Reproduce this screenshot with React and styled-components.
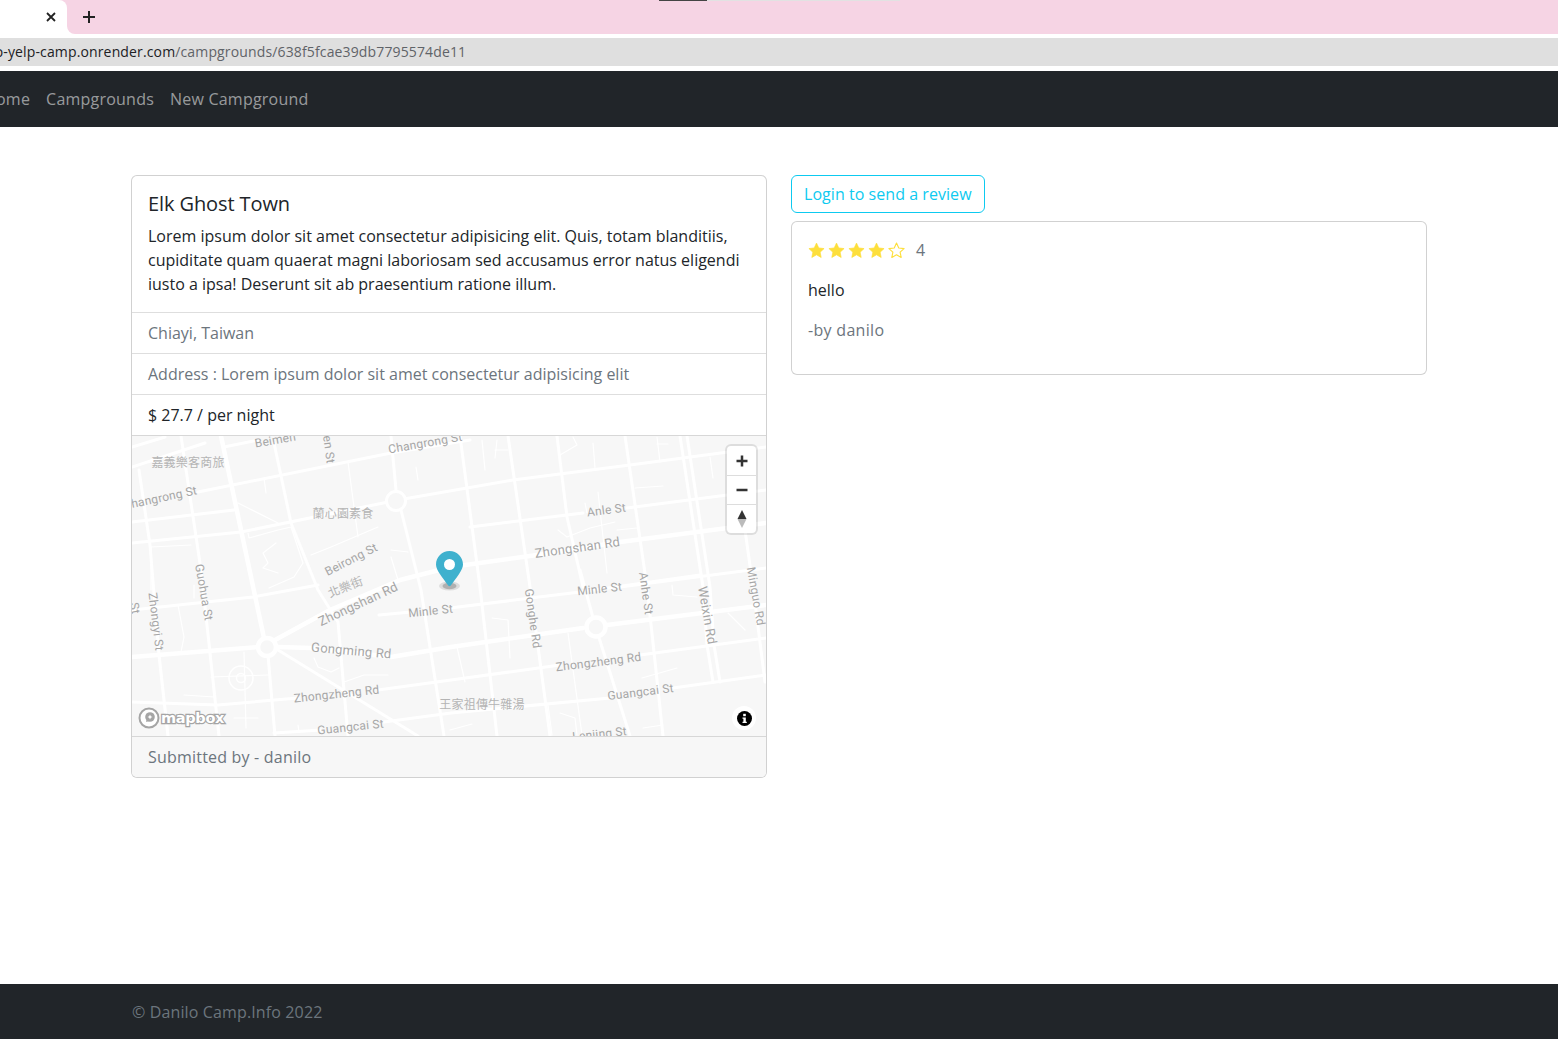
import React from 'react';
import styled, { createGlobalStyle } from 'styled-components';

const GlobalStyle = createGlobalStyle`
  * { box-sizing: border-box; }
  body {
    margin: 0;
    background: #fff;
    color: #212529;
    font-family: "Open Sans", "Noto Sans", sans-serif;
    font-size: 16px;
    line-height: 24px;
    overflow: hidden;
  }
`;

const Page = styled.div`
  width: 1558px;
  height: 1039px;
  display: flex;
  flex-direction: column;
  overflow: hidden;
`;

const TabStrip = styled.div`
  position: relative;
  height: 34px;
  display: flex;
  flex-shrink: 0;
`;

const TabWrap = styled.div`
  width: 67px;
  background: #f6d4e4;
`;

const Tab = styled.div`
  height: 34px;
  background: #fff;
  border-top-right-radius: 8px;
  display: flex;
  align-items: center;
  justify-content: flex-end;
  padding-right: 11px;
`;

const TabRest = styled.div`
  flex: 1;
  background: #f6d4e4;
  border-bottom-left-radius: 8px;
  padding-left: 16px;
  display: flex;
  align-items: center;
`;

const LoadBar = styled.div`
  position: absolute;
  top: 0;
  left: 659px;
  width: 241px;
  height: 1px;
  background: linear-gradient(to right, #444 0 48px, #e2e2e2 48px);
`;

const UrlBar = styled.div`
  height: 28px;
  margin: 4px 0 4px;
  background: #dfdfdf;
  flex-shrink: 0;
  white-space: nowrap;
  overflow: hidden;
  font-size: 14px;
  line-height: 28px;
  color: #5f6368;
  letter-spacing: 0.14px;
`;

const UrlText = styled.div`
  margin-left: -38px;
`;

const Host = styled.span`
  color: #202124;
`;

const Navbar = styled.nav`
  height: 56px;
  margin-top: 1px;
  flex-shrink: 0;
  background: #212529;
  display: flex;
  align-items: center;
  gap: 16px;
  padding-left: 0;
`;

const NavLink = styled.a`
  color: rgba(255, 255, 255, 0.55);
  font-size: 16px;
  letter-spacing: 0.22px;
  white-space: nowrap;
  &:first-child { margin-left: -16px; }
`;

const Main = styled.main`
  flex: 1;
  display: grid;
  grid-template-columns: 636px 636px;
  gap: 24px;
  padding: 48px 0 0 131px;
  align-items: start;
`;

const Card = styled.section`
  border: 1px solid rgba(0, 0, 0, 0.18);
  border-radius: 6px;
  background: #fff;
  overflow: hidden;
`;

const CardBody = styled.div`
  padding: 16px;
`;

const CardTitle = styled.h5`
  margin: 0 0 8px;
  font-size: 20px;
  line-height: 24px;
  font-weight: 400;
  letter-spacing: -0.1px;
`;

const CardText = styled.p`
  margin: 0;
`;

const ListItem = styled.div`
  height: 41px;
  padding: 8px 16px;
  border-top: 1px solid rgba(0, 0, 0, 0.13);
  color: ${(props) => (props.$muted ? '#6c757d' : '#212529')};
`;

const MapFrame = styled.div`
  position: relative;
  height: 301px;
  border-top: 1px solid rgba(0, 0, 0, 0.13);
  background: #f7f7f7;
`;

const MapSvg = styled.svg`
  display: block;
  width: 634px;
  height: 300px;
`;

const MapControls = styled.div`
  position: absolute;
  top: 10px;
  right: 10px;
  width: 29px;
  background: #fff;
  border-radius: 4px;
  box-shadow: 0 0 0 2px rgba(0, 0, 0, 0.1);
`;

const MapControl = styled.div`
  height: 29px;
  display: flex;
  align-items: center;
  justify-content: center;
  & + & { border-top: 1px solid #ddd; }
`;

const InfoBadge = styled.div`
  position: absolute;
  right: 10px;
  bottom: 6px;
  width: 24px;
  height: 24px;
  border-radius: 50%;
  background: #fff;
  display: flex;
  align-items: center;
  justify-content: center;
`;

const CardFooter = styled.div`
  height: 41px;
  padding: 8px 16px;
  border-top: 1px solid rgba(0, 0, 0, 0.13);
  background: #f7f7f7;
  color: #6c757d;
  letter-spacing: 0.2px;
`;

const Side = styled.div`
  display: flex;
  flex-direction: column;
  gap: 8px;
  align-items: flex-start;
`;

const LoginButton = styled.a`
  height: 38px;
  padding: 6px 12px;
  border: 1px solid #0dcaf0;
  border-radius: 6px;
  color: #0dcaf0;
  white-space: nowrap;
  letter-spacing: 0.05px;
`;

const ReviewCard = styled(Card)`
  width: 636px;
  padding: 16px;
`;

const RatingRow = styled.div`
  height: 24px;
  margin-bottom: 16px;
  display: flex;
  align-items: center;
  gap: 3px;
`;

const RatingValue = styled.span`
  margin-left: 8px;
  color: #6c757d;
`;

const ReviewText = styled.p`
  margin: 0 0 16px;
  color: ${(props) => (props.$muted ? '#6c757d' : '#212529')};
  letter-spacing: ${(props) => (props.$muted ? '0.3px' : '0')};
`;

const Footer = styled.footer`
  height: 55px;
  flex-shrink: 0;
  background: #212529;
  color: #6c757d;
  padding-left: 132px;
  display: flex;
  align-items: center;
  letter-spacing: 0.13px;
`;

// page coordinates, the svg viewBox starts at the map's top left corner
const bigRoads = [
  'M221 436 L264 638',
  'M132 657 L258 647',
  'M278 647 L311 648',
  'M311 648 L391 657 L451 647 L583 628',
  'M607 625 L766 605',
  'M275 640 L330 610 L400 580 L451 567 L537 555 L620 542 L766 523',
];

const roads = [
  'M274 443 L291 523 L318 590 L338 622 L348 736',
  'M391 436 L396 490 L421 590 L444 736',
  'M580 570 L595 625 L630 736',
  'M557 436 L567 517 L583 587',
  'M508 436 L530 587 L550 736',
  'M460 436 L480 587 L497 736',
  'M625 436 L647 587 L663 736',
  'M680 436 L703 587 L707 645 L713 682',
  'M687 436 L710 587 L714 645 L720 682',
  'M745 530 L753 587 L765 682',
  'M139 470 L150 545 L159 655 L168 736',
  'M181 436 L201 570 L219 736',
  'M198 492 L391 453 L470 440',
  'M132 543 L241 532 L398 500 L513 480 L630 465 L766 447',
  'M132 522 L234 510',
  'M470 527 L583 513',
  'M627 508 L766 490',
  'M132 610 L253 597 L318 585',
  'M379 615 L411 612',
  'M450 608 L580 592 L700 575',
  'M620 587 L766 568',
  'M132 702 L218 705 L298 698',
  'M378 690 L451 680 L560 665',
  'M640 655 L766 638',
  'M274 733 L321 730',
  'M384 722 L451 713 L610 698',
  'M673 688 L766 675',
  'M278 650 L418 736',
  'M224 447 L258 440',
  'M132 447 L165 437',
  'M132 467 L205 443',
  'M268 655 L275 736',
];

const lanes = [
  'M573 437 L577 445 L560 455',
  'M593 443 L595 468',
  'M482 440 L485 470',
  'M497 440 L495 458 M495 450 L508 450',
  'M657 437 L660 462 M657 444 L668 444',
  'M710 457 L713 478',
  'M635 488 L663 486',
  'M585 503 L587 513',
  'M598 492 L607 573',
  'M558 530 L567 537 L590 528 L615 522',
  'M617 530 L637 528',
  'M264 478 L266 493',
  'M416 467 L418 480',
  'M348 462 L358 537',
  'M238 503 L278 523',
  'M248 533 L249 538 L278 530 L291 527 L303 563 L294 577 L269 588',
  'M276 543 L263 553 L268 563 L263 568 L278 573',
  'M311 555 L331 547 L378 527',
  'M391 550 L408 552 M391 557 L398 580',
  'M151 547 L151 590 M151 547 L191 545',
  'M178 605 L184 637 L181 652',
  'M194 585 L194 598',
  'M244 652 L246 728',
  'M211 677 L268 675',
  'M184 695 L214 697',
  'M234 718 L258 718',
  'M314 658 L318 667 L331 672 L339 668',
  'M344 682 L364 675 L388 675',
  'M298 725 L299 732',
  'M492 618 L508 620 L510 658',
  'M457 647 L465 682',
  'M568 633 L582 735',
  'M642 678 L677 668',
  'M548 705 L552 735',
  'M560 713 L575 718 L577 735',
  'M450 730 L472 724',
  'M728 613 L745 630',
  'M672 585 L673 595 L697 597',
  'M643 728 L663 725',
];

const labels = [
  { t: 'Beimen', x: 276, y: 444, r: -10, s: 12 },
  { t: 'en St', x: 325, y: 450, r: 82, s: 12 },
  { t: 'Changrong St', x: 426, y: 447, r: -10, s: 12 },
  { t: 'Changrong St', x: 161, y: 502, r: -12, s: 12 },
  { t: 'Anle St', x: 607, y: 514, r: -7, s: 12 },
  { t: 'Zhongshan Rd', x: 578, y: 552, r: -8, s: 13 },
  { t: 'Beirong St', x: 353, y: 563, r: -27, s: 12 },
  { t: 'Zhongshan Rd', x: 360, y: 608, r: -25, s: 13 },
  { t: 'Minle St', x: 431, y: 615, r: -6, s: 12 },
  { t: 'Minle St', x: 600, y: 593, r: -6, s: 12 },
  { t: 'Guohua St', x: 200, y: 593, r: 80, s: 12 },
  { t: 'Zhongyi St', x: 152, y: 622, r: 83, s: 12 },
  { t: 'St', x: 131, y: 609, r: 80, s: 12 },
  { t: 'Gongming Rd', x: 351, y: 655, r: 5, s: 13 },
  { t: 'Zhongzheng Rd', x: 337, y: 698, r: -6, s: 12 },
  { t: 'Zhongzheng Rd', x: 599, y: 666, r: -7, s: 12 },
  { t: 'Guangcai St', x: 351, y: 731, r: -6, s: 12 },
  { t: 'Guangcai St', x: 641, y: 696, r: -7, s: 12 },
  { t: 'Gonghe Rd', x: 529, y: 619, r: 82, s: 12 },
  { t: 'Anhe St', x: 642, y: 594, r: 82, s: 12 },
  { t: 'Weixin Rd', x: 703, y: 616, r: 80, s: 13 },
  { t: 'Minguo Rd', x: 752, y: 597, r: 80, s: 12 },
  { t: 'Lenjing St', x: 600, y: 738, r: -6, s: 12 },
  { t: '嘉義樂客商旅', x: 188, y: 467, r: 0, s: 12, cjk: true },
  { t: '蘭心園素食', x: 343, y: 518, r: 0, s: 12, cjk: true },
  { t: '北樂街', x: 347, y: 591, r: -22, s: 12, cjk: true },
  { t: '王家祖傳牛雜湯', x: 482, y: 709, r: 0, s: 12, cjk: true },
];

function StarIcon({ filled }) {
  return (
    <svg width="17" height="17" viewBox="0 0 24 24">
      <path
        d="M12 1.5l3.2 6.900 7.500.9-5.600 5.100 1.500 7.400L12 18.100l-6.600 3.700 1.500-7.400L1.300 9.300l7.500-.9z"
        fill={filled ? '#fddf3c' : '#fff'}
        stroke="#fddf3c"
        strokeWidth={filled ? 1 : 1.6}
        strokeLinejoin="round"
      />
    </svg>
  );
}

function MapDrawing() {
  return (
    <MapSvg viewBox="132 436 634 300">
      <rect x="132" y="436" width="634" height="300" fill="#f7f7f7" />
      <g fill="none" stroke="#fff" strokeLinecap="round" strokeLinejoin="round">
        {lanes.map((d) => (
          <path key={d} d={d} strokeWidth="1.2" />
        ))}
        {roads.map((d) => (
          <path key={d} d={d} strokeWidth="3" />
        ))}
        {bigRoads.map((d) => (
          <path key={d} d={d} strokeWidth="4.5" />
        ))}
        <circle cx="267" cy="647" r="9" strokeWidth="4.5" fill="#f7f7f7" />
        <circle cx="596" cy="627" r="9.5" strokeWidth="4.5" fill="#f7f7f7" />
        <circle cx="396" cy="501" r="9.5" strokeWidth="3" fill="#f7f7f7" />
        <circle cx="241" cy="678" r="12" strokeWidth="1.5" />
        <circle cx="241" cy="678" r="4.5" strokeWidth="1.5" />
      </g>
      {labels.map((l) => (
        <text
          key={l.t + l.x}
          x={l.x}
          y={l.y}
          fontSize={l.s}
          fill={l.cjk ? '#b4b4b4' : '#a6a6a6'}
          fontFamily={l.cjk ? '"Noto Sans CJK TC", sans-serif' : 'Roboto, sans-serif'}
          letterSpacing="0.2"
          textAnchor="middle"
          transform={`rotate(${l.r} ${l.x} ${l.y})`}
        >
          {l.t}
        </text>
      ))}
      {/* default marker */}
      <g transform="translate(436 551)">
        <ellipse cx="13.5" cy="35" rx="10.5" ry="4.5" fill="#000" opacity="0.1" />
        <ellipse cx="13.5" cy="35" rx="7" ry="3.2" fill="#000" opacity="0.2" />
        <path
          fill="#3fb1ce"
          d="M27 13.5C27 19.070 20.250 27 14.750 34.500C14.020 35.500 12.980 35.500 12.250 34.500C6.750 27 0 19.220 0 13.500C0 6.040 6.040 0 13.500 0C20.960 0 27 6.040 27 13.500Z"
        />
        <circle cx="13.5" cy="13.5" r="5.5" fill="#fff" />
      </g>
      {/* mapbox logo */}
      <g>
        <circle cx="149" cy="718" r="9.5" fill="#fff" stroke="#a5a5a5" strokeWidth="2" />
        <circle cx="150" cy="717" r="4.8" fill="#a5a5a5" />
        <path d="M146 722l1.5-5 3.500 3.500z" fill="#a5a5a5" />
        <path d="M150 714.500l.8 1.700 1.700.8-1.700.8-.8 1.700-.8-1.700-1.700-.8 1.700-.8z" fill="#fff" />
        <text
          x="161"
          y="723"
          fontSize="14.5"
          fontWeight="700"
          fontFamily='"DejaVu Sans", sans-serif'
          fill="#fff"
          stroke="#a5a5a5"
          strokeWidth="2.4"
          paintOrder="stroke"
          letterSpacing="-0.3"
        >
          mapbox
        </text>
      </g>
    </MapSvg>
  );
}

export default function App() {
  return (
    <Page>
      <GlobalStyle />
      <TabStrip>
        <TabWrap>
          <Tab>
            <svg width="10" height="10" viewBox="0 0 10 10">
              <path d="M1 1l8 8M9 1l-8 8" stroke="#222" strokeWidth="1.8" />
            </svg>
          </Tab>
        </TabWrap>
        <TabRest>
          <svg width="12" height="12" viewBox="0 0 12 12">
            <path d="M6 0v12M0 6h12" stroke="#222" strokeWidth="2" />
          </svg>
        </TabRest>
        <LoadBar />
      </TabStrip>
      <UrlBar>
        <UrlText>
          <Host>danilo-yelp-camp.onrender.com</Host>/campgrounds/638f5fcae39db7795574de11
        </UrlText>
      </UrlBar>
      <Navbar>
        <NavLink>Home</NavLink>
        <NavLink>Campgrounds</NavLink>
        <NavLink>New Campground</NavLink>
      </Navbar>
      <Main>
        <Card>
          <CardBody>
            <CardTitle>Elk Ghost Town</CardTitle>
            <CardText>
              Lorem ipsum dolor sit amet consectetur adipisicing elit. Quis, totam blanditiis,
              cupiditate quam quaerat magni laboriosam sed accusamus error natus eligendi iusto a
              ipsa! Deserunt sit ab praesentium ratione illum.
            </CardText>
          </CardBody>
          <ListItem $muted>Chiayi, Taiwan</ListItem>
          <ListItem $muted>Address : Lorem ipsum dolor sit amet consectetur adipisicing elit</ListItem>
          <ListItem>$ 27.7 / per night</ListItem>
          <MapFrame>
            <MapDrawing />
            <MapControls>
              <MapControl>
                <svg width="14" height="14" viewBox="0 0 14 14">
                  <path d="M7 1.500v11M1.500 7h11" stroke="#333" strokeWidth="2.5" />
                </svg>
              </MapControl>
              <MapControl>
                <svg width="14" height="14" viewBox="0 0 14 14">
                  <path d="M1.500 7h11" stroke="#333" strokeWidth="2.5" />
                </svg>
              </MapControl>
              <MapControl>
                <svg width="12" height="20" viewBox="0 0 12 20">
                  <path d="M6 1l4.500 9h-9z" fill="#333" />
                  <path d="M6 19l4.500-9h-9z" fill="#bbb" />
                </svg>
              </MapControl>
            </MapControls>
            <InfoBadge>
              <svg width="15" height="15" viewBox="0 0 15 15">
                <circle cx="7.5" cy="7.5" r="7.5" fill="#000" />
                <rect x="6.2" y="2.8" width="2.6" height="2.4" fill="#fff" />
                <path d="M5.500 6.400h3.300v4.300h1v1.300H5.500v-1.300h.9V7.700h-.9z" fill="#fff" />
              </svg>
            </InfoBadge>
          </MapFrame>
          <CardFooter>Submitted by - danilo</CardFooter>
        </Card>
        <Side>
          <LoginButton>Login to send a review</LoginButton>
          <ReviewCard>
            <RatingRow>
              {[1, 2, 3, 4, 5].map((n) => (
                <StarIcon key={n} filled={n <= 4} />
              ))}
              <RatingValue>4</RatingValue>
            </RatingRow>
            <ReviewText>hello</ReviewText>
            <ReviewText $muted>-by danilo</ReviewText>
          </ReviewCard>
        </Side>
      </Main>
      <Footer>© Danilo Camp.Info 2022</Footer>
    </Page>
  );
}
